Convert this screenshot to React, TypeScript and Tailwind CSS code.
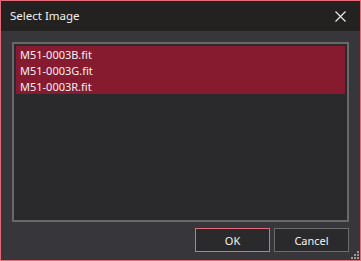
import React from "react";

export default function App() {
  const files = ["M51-0003B.fit", "M51-0003G.fit", "M51-0003R.fit"];
  return (
    <div
      className="w-[361px] h-[261px] border border-[#e46a78] bg-[#37363b] flex flex-col text-[#f2f2f2]"
      style={{ fontFamily: '"Noto Sans", "Open Sans", sans-serif' }}
    >
      <div className="h-[30px] bg-[#232221] flex items-center justify-between pl-[9px] pr-[10px] shrink-0">
        <span className="text-[11.5px] leading-none">Select Image</span>
        <svg width="11" height="11" viewBox="0 0 11 11" className="mr-[4px]">
          <path d="M0.5 0.5 L10.5 10.5 M10.5 0.5 L0.5 10.5" stroke="#f0f0f0" strokeWidth="1.1" />
        </svg>
      </div>
      <div className="flex-1 flex flex-col px-[11px] pt-[11px] pb-[8px] relative">
        <div className="h-[180px] border-2 border-[#686868] bg-[#2a2a2c] p-[2px] shrink-0">
          {files.map((f) => (
            <div key={f} className="h-[16px] bg-[#861a2e] flex items-center pl-[4px] text-[11px] leading-none">
              {f}
            </div>
          ))}
        </div>
        <div className="flex justify-end gap-[4px] mt-[6px]">
          <button className="w-[75px] h-[24px] border border-[#e46a78] bg-[#2a2a2c] text-[11px] leading-none">OK</button>
          <button className="w-[75px] h-[24px] border border-[#6b6b6b] bg-[#2a2a2c] text-[11px] leading-none">Cancel</button>
        </div>
        <svg width="8" height="8" viewBox="0 0 8 8" className="absolute right-[1px] bottom-[1px]">
          <rect x="6" y="0" width="2" height="2" fill="#9a9a9a" />
          <rect x="3" y="3" width="2" height="2" fill="#9a9a9a" />
          <rect x="6" y="3" width="2" height="2" fill="#9a9a9a" />
          <rect x="0" y="6" width="2" height="2" fill="#9a9a9a" />
          <rect x="3" y="6" width="2" height="2" fill="#9a9a9a" />
          <rect x="6" y="6" width="2" height="2" fill="#9a9a9a" />
        </svg>
      </div>
    </div>
  );
}
